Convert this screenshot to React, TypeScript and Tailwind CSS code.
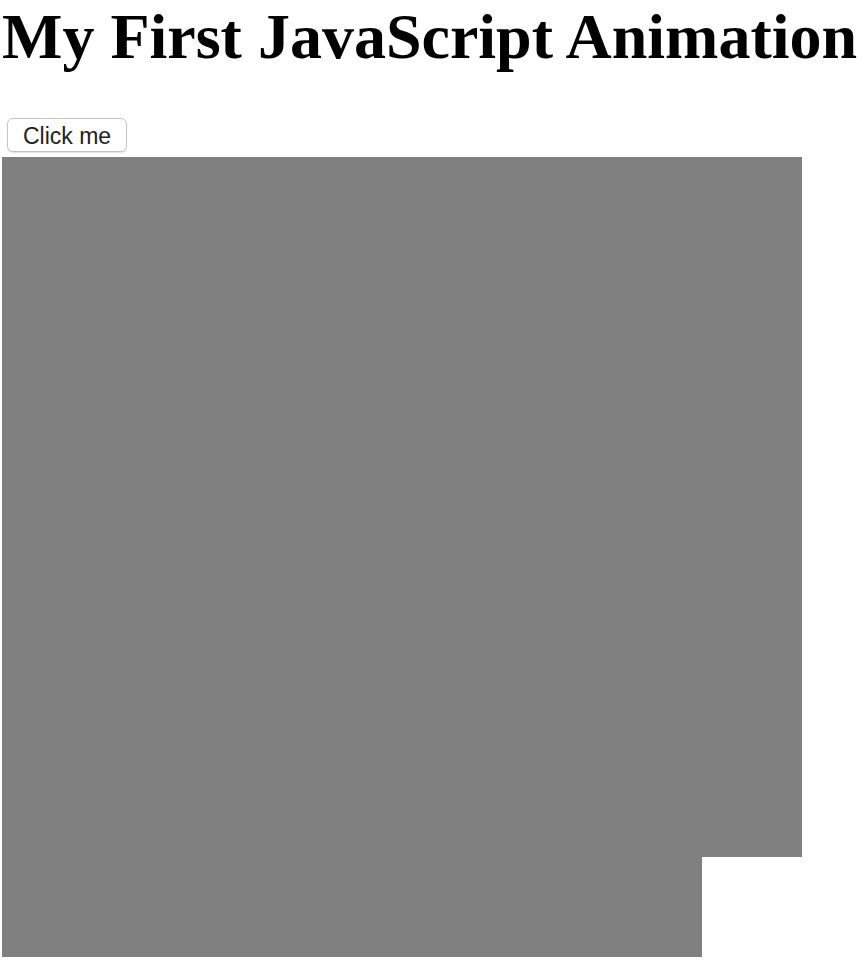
import React from 'react';

const App: React.FC = () => {
  return (
    <div className="bg-white text-black">
      <h1 className="m-0 whitespace-nowrap pt-[3px] pl-[2px] font-['Liberation_Serif',serif] text-[64px] font-bold leading-[68px]">
        My First JavaScript Animation
      </h1>

      <div className="pt-[47px] pl-[7px]">
        <button className="flex h-[34px] w-[120px] items-center justify-center rounded-[6px] border border-[#c4c4c4] bg-white pt-[2px] font-['Liberation_Sans',Arial,sans-serif] text-[23px] text-[#222] shadow-[0_1px_1px_rgba(0,0,0,0.12)]">
          Click me
        </button>
      </div>

      {/* Container + box sliding out of it */}
      <div className="mt-[5px] ml-[2px] w-[800px]">
        <div className="h-[700px] w-[800px] bg-[#808080]" />
        <div className="h-[100px] w-[700px] bg-[#808080]" />
      </div>
    </div>
  );
};

export default App;
